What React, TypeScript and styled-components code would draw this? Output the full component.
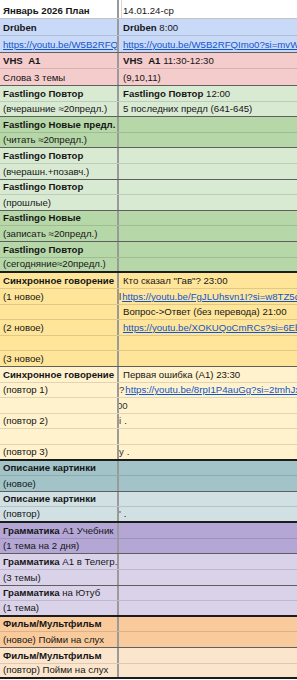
import React, { ReactNode } from 'react';
import styled, { createGlobalStyle } from 'styled-components';

const GlobalStyle = createGlobalStyle`
    html, body {
        margin: 0;
        padding: 0;
        background: #ffffff;
    }

    body {
        width: 297px;
        height: 680px;
        overflow: hidden;
        font-family: 'Liberation Sans', Arial, sans-serif;
        font-size: 9.65px;
        color: #161616;
    }
`;

type Tone =
    | 'white'
    | 'blue'
    | 'red'
    | 'greenLight'
    | 'green'
    | 'yellow'
    | 'yellowLight'
    | 'cyan'
    | 'cyanLight'
    | 'purple'
    | 'purpleLight'
    | 'orange'
    | 'orangeLight';

type Edge = 'head' | 'thin' | 'pair' | 'group';

const tones: Record<Tone, string> = {
    white: '#ffffff',
    blue: '#c9daf8',
    red: '#f4cccc',
    greenLight: '#d9ead3',
    green: '#b6d7a8',
    yellow: '#ffe599',
    yellowLight: '#fff2cc',
    cyan: '#a2c4c9',
    cyanLight: '#d0e0e3',
    purple: '#b4a7d6',
    purpleLight: '#d9d2e9',
    orange: '#f9cb9c',
    orangeLight: '#fce5cd',
};

const edges: Record<Edge, string> = {
    head: '1px solid #c4c4c4',
    thin: '1px solid rgba(0, 0, 0, 0.12)',
    pair: '1px solid #5f5f5f',
    group: '2px solid #1c1c1c',
};

const Sheet = styled.div`
    display: flex;
    flex-direction: column;
    width: 297px;
`;

const Row = styled.div<{ $tone: Tone; $edge: Edge; $h: number }>`
    display: flex;
    height: ${p => p.$h}px;
    box-sizing: border-box;
    background: ${p => tones[p.$tone]};
    border-bottom: ${p => edges[p.$edge]};
`;

const Cell = styled.div`
    display: flex;
    align-items: flex-end;
    padding: 0 0 1px 3px;
    box-sizing: border-box;
    line-height: 12px;
    white-space: nowrap;
    overflow: hidden;
`;

const LeftCell = styled(Cell)`
    width: 117px;
    flex-shrink: 0;
`;

const RightCell = styled(Cell)<{ $boxed?: boolean }>`
    flex: 1;
    padding-left: 4px;
    border-left: 2px solid #9a9a9a;
    box-shadow: ${p => (p.$boxed ? 'inset 2px 0 0 #ffffff, inset 3px 0 0 #d6d6d6' : 'none')};
`;

const Bold = styled.b`
    font-weight: 700;
`;

const Link = styled.span`
    color: #1155cc;
    text-decoration: underline;
`;

// a scrap of text that spills from the hidden column under the frozen divider
const Spill = styled.span<{ $gap?: number; $shift?: number }>`
    margin-left: -${p => p.$shift ?? 4}px;
    margin-right: ${p => p.$gap ?? 0}px;
    color: #333333;
`;

interface Line {
    left?: ReactNode;
    right?: ReactNode;
    tone: Tone;
    edge: Edge;
    h?: number;
}

const lines: Line[] = [
    { left: <Bold>Январь 2026 План</Bold>, right: '14.01.24-ср', tone: 'white', edge: 'head', h: 19 },
    { left: <Bold>Drüben</Bold>, right: <><Bold>Drüben</Bold>&nbsp;8:00</>, tone: 'blue', edge: 'thin', h: 16.75 },
    {
        left: <Link>https://youtu.be/W5B2RFQImo0?si=mvW</Link>,
        right: <Link>https://youtu.be/W5B2RFQImo0?si=mvWxK3a</Link>,
        tone: 'blue',
        edge: 'pair',
        h: 16.75,
    },
    { left: <Bold>VHS&nbsp;&nbsp;A1</Bold>, right: <><Bold>VHS&nbsp;&nbsp;A1</Bold>&nbsp;11:30-12:30</>, tone: 'red', edge: 'thin', h: 16.75 },
    { left: 'Слова 3 темы', right: '(9,10,11)', tone: 'red', edge: 'pair', h: 16.75 },
    { left: <Bold>Fastlingo Повтор</Bold>, right: <><Bold>Fastlingo Повтор</Bold>&nbsp;12:00</>, tone: 'greenLight', edge: 'thin' },
    { left: '(вчерашние ≈20предл.)', right: '5 последних предл (641-645)', tone: 'greenLight', edge: 'pair' },
    { left: <Bold>Fastlingo Новые предл.</Bold>, tone: 'green', edge: 'thin' },
    { left: '(читать ≈20предл.)', tone: 'green', edge: 'pair' },
    { left: <Bold>Fastlingo Повтор</Bold>, tone: 'greenLight', edge: 'thin' },
    { left: '(вчерашн.+позавч.)', tone: 'greenLight', edge: 'pair' },
    { left: <Bold>Fastlingo Повтор</Bold>, tone: 'greenLight', edge: 'thin' },
    { left: '(прошлые)', tone: 'greenLight', edge: 'pair' },
    { left: <Bold>Fastlingo Новые</Bold>, tone: 'green', edge: 'thin' },
    { left: '(записать ≈20предл.)', tone: 'green', edge: 'pair' },
    { left: <Bold>Fastlingo Повтор</Bold>, tone: 'green', edge: 'thin' },
    { left: '(сегодняние≈20предл.)', tone: 'green', edge: 'group' },
    { left: <Bold>Синхронное говорение</Bold>, right: 'Кто сказал "Гав"? 23:00', tone: 'yellow', edge: 'thin' },
    {
        left: '(1 новое)',
        right: <><Spill $gap={1}>l</Spill><Link>https://youtu.be/FgJLUhsvn1I?si=w8TZ5q</Link></>,
        tone: 'yellow',
        edge: 'thin',
    },
    { right: 'Вопрос->Ответ (без перевода) 21:00', tone: 'yellow', edge: 'thin' },
    { left: '(2 новое)', right: <Link>https://youtu.be/XOKUQoCmRCs?si=6Ebq</Link>, tone: 'yellow', edge: 'thin' },
    { tone: 'yellow', edge: 'thin' },
    { left: '(3 новое)', tone: 'yellow', edge: 'pair' },
    { left: <Bold>Синхронное говорение</Bold>, right: 'Первая ошибка (A1) 23:30', tone: 'yellowLight', edge: 'thin' },
    {
        left: '(повтор 1)',
        right: <><Spill $gap={1}>?</Spill><Link>https://youtu.be/8rpI1P4auGg?si=2tmhJx</Link></>,
        tone: 'yellowLight',
        edge: 'thin',
    },
    { right: <Spill $shift={6}>00</Spill>, tone: 'yellowLight', edge: 'thin' },
    { left: '(повтор 2)', right: <><Spill $gap={3}>i</Spill>.</>, tone: 'yellowLight', edge: 'thin' },
    { tone: 'yellowLight', edge: 'thin' },
    { left: '(повтор 3)', right: <><Spill $gap={3}>y</Spill>.</>, tone: 'yellowLight', edge: 'group' },
    { left: <Bold>Описание картинки</Bold>, tone: 'cyan', edge: 'thin' },
    { left: '(новое)', tone: 'cyan', edge: 'pair' },
    { left: <Bold>Описание картинки</Bold>, tone: 'cyanLight', edge: 'thin' },
    { left: '(повтор)', right: <><Spill $gap={3}>'</Spill>.</>, tone: 'cyanLight', edge: 'group' },
    { left: <><Bold>Грамматика</Bold>&nbsp;А1 Учебник</>, tone: 'purple', edge: 'thin' },
    { left: '(1 тема на 2 дня)', tone: 'purple', edge: 'pair' },
    { left: <><Bold>Грамматика</Bold>&nbsp;А1 в Телегр.</>, tone: 'purpleLight', edge: 'thin' },
    { left: '(3 темы)', tone: 'purpleLight', edge: 'pair' },
    { left: <><Bold>Грамматика</Bold>&nbsp;на Ютуб</>, tone: 'purpleLight', edge: 'thin' },
    { left: '(1 тема)', tone: 'purpleLight', edge: 'group' },
    { left: <Bold>Фильм/Мультфильм</Bold>, tone: 'orange', edge: 'thin' },
    { left: '(новое) Пойми на слух', tone: 'orange', edge: 'pair' },
    { left: <Bold>Фильм/Мультфильм</Bold>, tone: 'orangeLight', edge: 'thin' },
    { left: '(повтор) Пойми на слух', tone: 'orangeLight', edge: 'group' },
];

export default function App() {
    return (
        <>
            <GlobalStyle />
            <Sheet>
                {lines.map((line, i) => (
                    <Row key={i} $tone={line.tone} $edge={line.edge} $h={line.h ?? 15.62}>
                        <LeftCell>{line.left}</LeftCell>
                        <RightCell $boxed={i === 0}>{line.right}</RightCell>
                    </Row>
                ))}
            </Sheet>
        </>
    );
}
